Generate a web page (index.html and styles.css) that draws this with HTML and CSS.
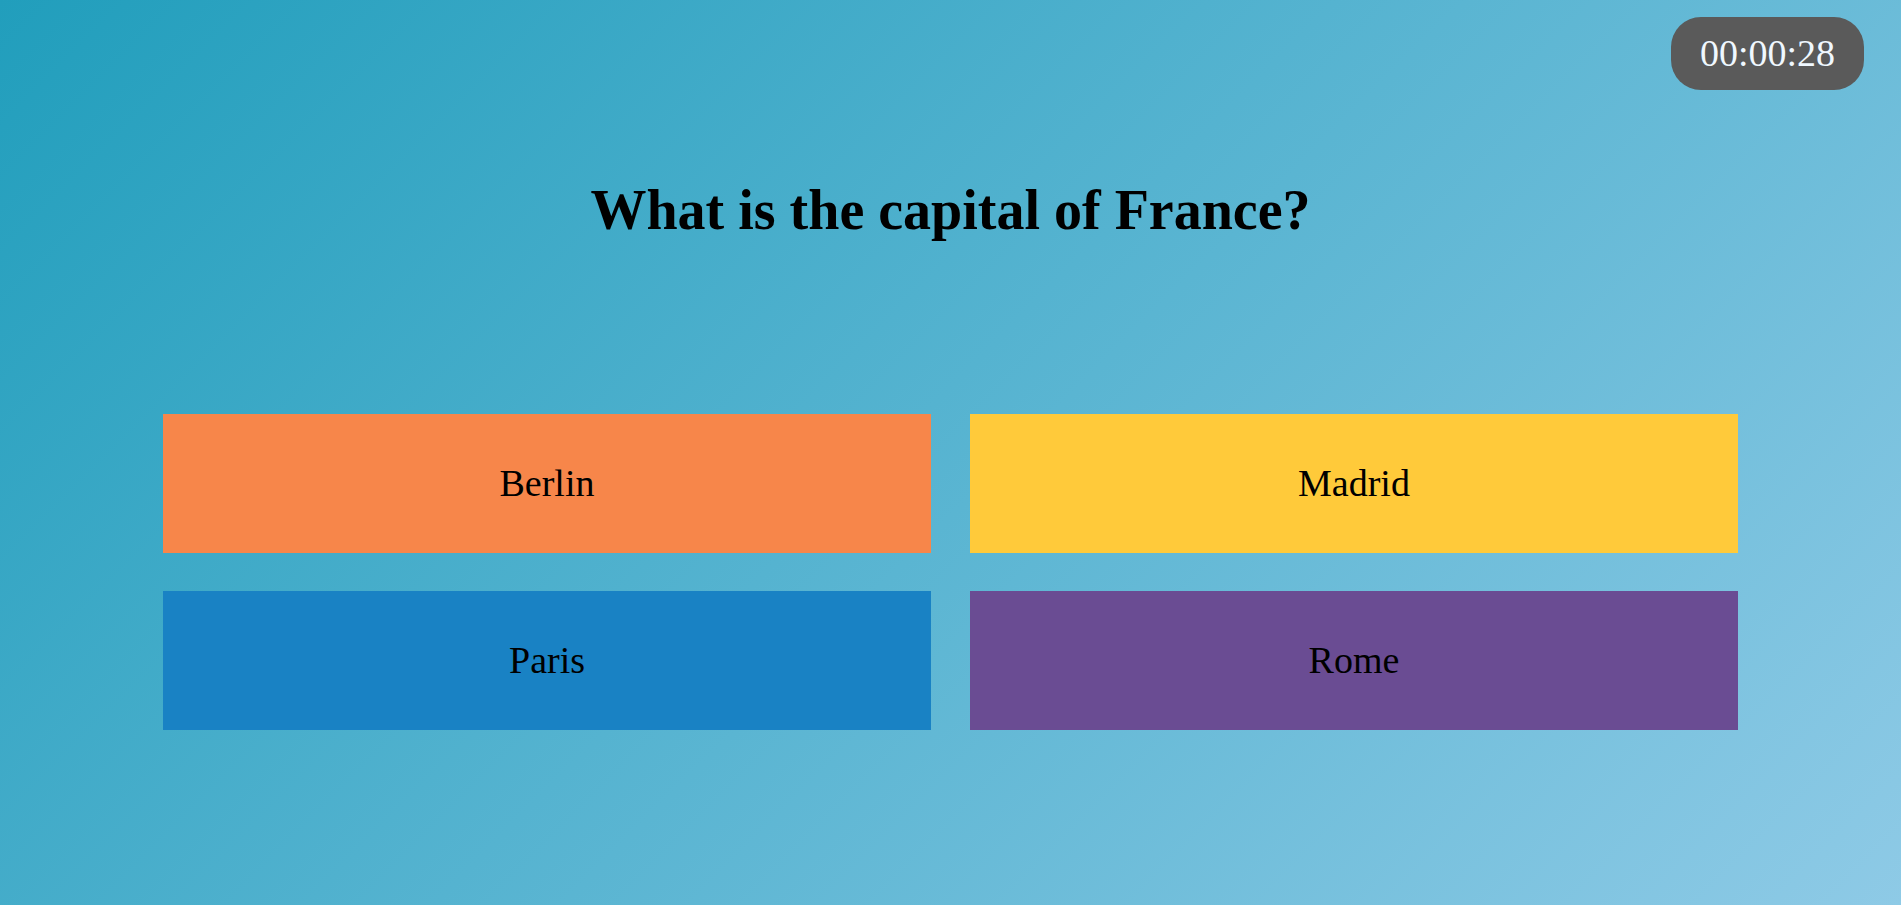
FILE: index.html
```html
<!DOCTYPE html>
<html lang="en">
<head>
<meta charset="utf-8">
<meta name="viewport" content="width=device-width, initial-scale=1">
<title>Quiz</title>
<link rel="stylesheet" href="styles.css">
</head>
<body>
<main class="quiz">
  <div class="timer" role="timer">00:00:28</div>
  <h1 class="question">What is the capital of France?</h1>
  <div class="answers">
    <button type="button" class="answer orange">Berlin</button>
    <button type="button" class="answer yellow">Madrid</button>
    <button type="button" class="answer blue">Paris</button>
    <button type="button" class="answer purple">Rome</button>
  </div>
</main>
</body>
</html>
```
FILE: styles.css
```css
* {
  box-sizing: border-box;
}

body {
  margin: 0;
  background: #fff;
  font-family: "Liberation Serif", "Times New Roman", serif;
  font-size: 38px;
}

.quiz {
  display: flex;
  flex-direction: column;
  min-height: calc(100vh - 1px);
  padding: 17px 37px 38px;
  background: linear-gradient(135deg, #219ebc, #8ecae6);
}

.timer {
  align-self: flex-end;
  padding: 15px 29px;
  border-radius: 30px;
  background: #5a5a5a;
  color: #f0f8ff;
  line-height: 43px;
}

.question {
  margin: 88px 0 0;
  font-size: 56px;
  line-height: 64px;
  text-align: center;
}

.answers {
  display: grid;
  grid-template-columns: 1fr 1fr;
  gap: 38px 39px;
  margin: 172px 126px 0;
}

.answer {
  padding: 48px 20px;
  border: 0;
  color: #000;
  font: inherit;
  line-height: 43px;
  cursor: pointer;
}

.orange {
  background: #f7864a;
}

.yellow {
  background: #ffca3a;
}

.blue {
  background: #1982c4;
}

.purple {
  background: #6a4c93;
}
```
